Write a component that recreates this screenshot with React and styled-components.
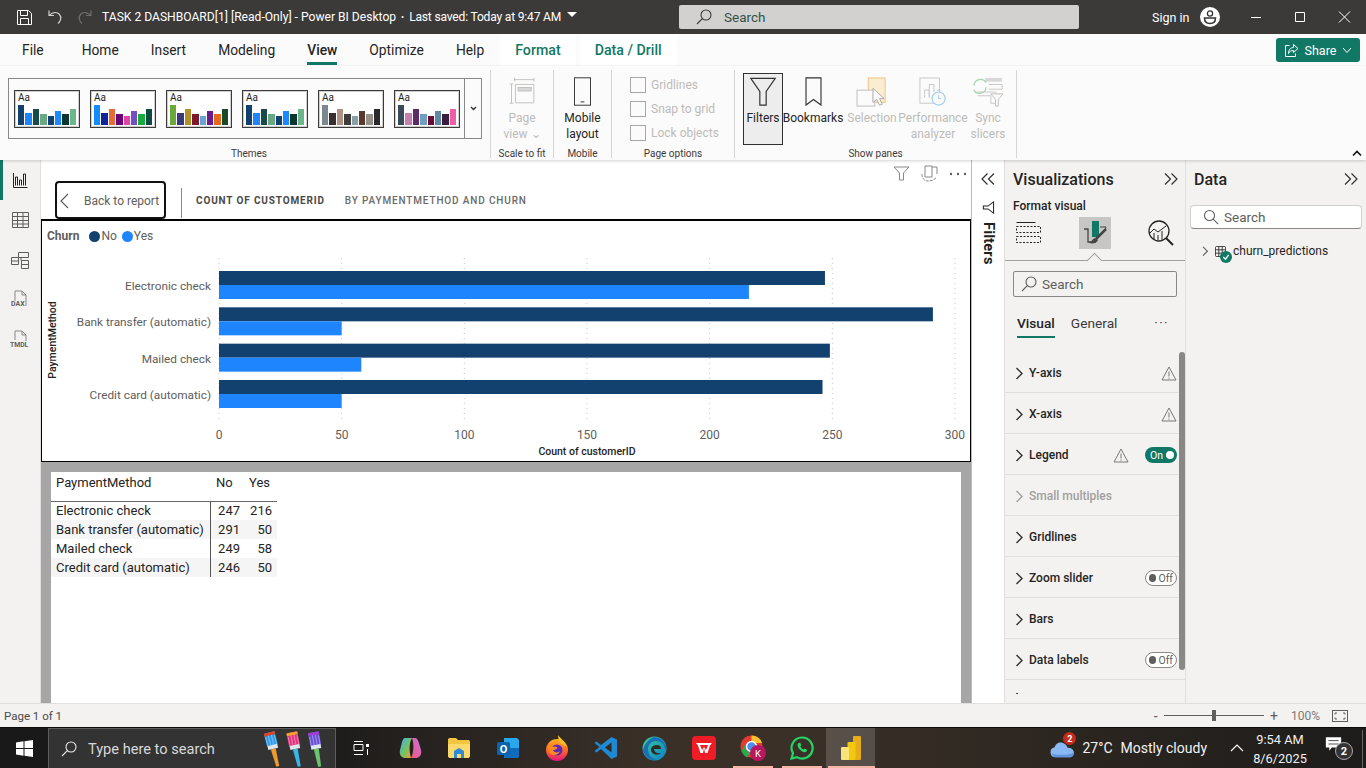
import React from "react";
import styled, { createGlobalStyle } from "styled-components";

const Global = createGlobalStyle`
  html, body { margin: 0; padding: 0; width: 1366px; height: 768px; overflow: hidden; background: #fff; }
  body { font-family: Roboto, "Liberation Sans", sans-serif; color: #252423; }
  * { box-sizing: border-box; }
  svg { display: block; flex: none; }
`;

const Page = styled.div`width:1366px;height:768px;display:flex;flex-direction:column;overflow:hidden;`;

/* Title bar */
const TitleBar = styled.header`height:34px;background:#3b3a39;display:flex;align-items:center;color:#fff;position:relative;flex:none;`;
const QuickIcons = styled.div`display:flex;align-items:center;gap:14px;padding-left:16px;width:102px;`;
const DocTitle = styled.div`font-size:12.1px;white-space:nowrap;display:flex;align-items:center;width:577px;`;
const Saved = styled.span`letter-spacing:-.2px;`;
const Dot = styled.span`margin:0 5px 0 5px;font-size:9px;`;
const Caret = styled.span`margin-left:6px;margin-top:-5px;width:0;height:0;border-left:5px solid transparent;border-right:5px solid transparent;border-top:5px solid #fff;`;
const SearchBar = styled.div`width:400px;height:24px;background:#d2d1cf;border-radius:2px;display:flex;align-items:center;gap:12px;padding-left:17px;font-size:13.5px;color:#33524c;`;
const SignIn = styled.div`font-size:12.5px;margin-left:73px;width:48px;`;
const Avatar = styled.div`width:20px;height:20px;`;
const WinControls = styled.div`display:flex;align-items:center;margin-left:29px;gap:28px;`;

/* Tabs */
const TabsRow = styled.nav`height:32px;background:#fbfbfb;display:flex;align-items:stretch;padding-left:22px;position:relative;flex:none;`;
const Tab = styled.div`
  font-size:13.8px;display:flex;align-items:center;height:100%;margin-right:${p=>p.$gap||32}px;white-space:nowrap;position:relative;
  font-weight:${p=>p.$active?500:400};color:#252423;
  ${p=>p.$active&&`&::after{content:"";position:absolute;left:0;right:0;bottom:1px;height:3px;background:#117865;}`}
`;
const ContextTab = styled.div`font-size:14.2px;font-weight:500;color:#117865;background:#fff;height:31px;display:flex;align-items:center;padding:0 15px;margin-right:4px;white-space:nowrap;`;
const ShareButton = styled.button`position:absolute;right:6px;top:4px;width:84px;height:24px;border:0;border-radius:3px;background:#117865;color:#fff;font:400 12.5px Roboto,sans-serif;display:flex;align-items:center;justify-content:center;gap:6px;`;

/* Ribbon */
const Ribbon = styled.section`height:94px;background:#fbfbfb;display:flex;padding-left:8px;position:relative;flex:none;box-shadow:0 1px 3px rgba(0,0,0,.18);z-index:2;`;
const Group = styled.div`width:${p=>p.$w}px;display:flex;flex-direction:column;align-items:stretch;position:relative;height:88px;margin-top:4px;
  border-right:1px solid #d6d6d6;`;
const GroupBody = styled.div`flex:1;display:flex;align-items:flex-start;min-height:0;padding-left:${p=>p.$pl||0}px;justify-content:${p=>p.$center?"center":"flex-start"};`;
const GroupLabel = styled.div`height:14px;margin-bottom:-3px;text-align:center;font-size:10px;line-height:14px;color:#3b3a39;white-space:nowrap;`;
const Gallery = styled.div`width:474px;height:61px;margin-top:8px;border:1px solid #8a8886;display:flex;background:#fbfbfb;`;
const ThemeList = styled.div`flex:1;display:flex;gap:10px;padding:11px 0 0 5px;`;
const ThemeCard = styled.div`width:66px;height:38px;border:1px solid #3b3a39;background:#fff;padding:1px 2px 2px 3px;box-shadow:0 0 0 1px #cfcfcf inset;position:relative;`;
const ThemeAa = styled.div`font-size:10px;line-height:11px;color:#252423;height:12px;`;
const SwatchRow = styled.div`display:flex;align-items:flex-end;gap:1px;position:absolute;left:3px;right:3px;bottom:2px;height:22px;`;
const Swatch = styled.i`flex:1;height:${p=>p.$h}px;background:${p=>p.$c};display:block;`;
const GalleryMore = styled.div`width:17px;border-left:1px solid #8a8886;display:flex;align-items:center;justify-content:center;`;
const BigBtn = styled.div`
  width:${p=>p.$w}px;height:${p=>p.$active?72:75}px;display:flex;flex-direction:column;align-items:center;padding-top:7px;flex:none;
  font-size:12px;line-height:16px;text-align:center;white-space:nowrap;color:${p=>p.$off?"#bdbbb9":"#252423"};
  ${p=>p.$active&&`background:#ededed;border:1px solid #323130;padding-top:3px;margin-top:3px;`}
`;
const BigIcon = styled.div`height:30px;display:flex;align-items:flex-start;justify-content:center;margin-bottom:3px;`;
const CheckList = styled.div`display:flex;flex-direction:column;gap:8px;padding:7px 0 0 18px;`;
const CheckRow = styled.div`display:flex;align-items:center;gap:5px;font-size:12px;color:#bdbbb9;height:16px;`;
const CheckBox = styled.i`display:block;width:16px;height:16px;border:1px solid #a8a6a4;`;
const Collapse = styled.div`position:absolute;right:4px;bottom:3px;`;

/* Main */
const Main = styled.main`flex:1;display:flex;min-height:0;`;
const LeftNav = styled.aside`width:41px;background:#f3f2f1;border-right:1px solid #e1dfdd;display:flex;flex-direction:column;align-items:center;position:relative;flex:none;padding-top:10px;gap:20px;`;
const NavMark = styled.div`position:absolute;left:0;top:0;width:3px;height:40px;background:#117865;`;
const NavIcon = styled.div`width:20px;height:20px;display:flex;align-items:center;justify-content:center;`;

const Canvas = styled.div`width:930px;display:flex;flex-direction:column;flex:none;background:#fff;`;
const CanvasHead = styled.div`height:60px;display:flex;align-items:flex-start;padding:21px 0 0 14px;position:relative;flex:none;`;
const BackBtn = styled.div`width:111px;height:38px;border:2px solid #111;border-radius:4px;display:flex;align-items:center;padding:2px 0 0 3px;gap:15px;font-size:12px;color:#5f5e5c;`;
const HeadSep = styled.div`width:1px;height:30px;background:#8a8886;margin:7px 14px 0 15px;`;
const VizTitle = styled.div`font-size:10px;letter-spacing:.85px;line-height:39px;font-weight:${p=>p.$bold?700:500};color:${p=>p.$bold?"#4a4947":"#6b6a68"};white-space:nowrap;margin-right:20px;`;
const HeadTools = styled.div`position:absolute;right:4px;top:5px;display:flex;gap:10px;align-items:center;`;
const ChartBox = styled.div`height:242px;border:1px solid #000;outline:.5px solid #000;flex:none;background:#fff;`;
const Legend = styled.div`height:30px;display:flex;align-items:center;padding-left:5px;font-size:12px;color:#605e5c;`;
const LegendTitle = styled.b`font-weight:700;margin-right:10px;`;
const LegendItem = styled.span`display:flex;align-items:center;gap:1px;margin-right:5px;`;
const LegendDot = styled.i`width:11px;height:11px;border-radius:50%;background:${p=>p.$c};display:block;`;
const TableArea = styled.div`flex:1;background:#a6a6a6;padding:10px 10px 0;min-height:0;`;
const TablePanel = styled.div`background:#fff;height:100%;`;
const Matrix = styled.table`border-collapse:collapse;font-size:13px;color:#252423;width:226px;table-layout:fixed;`;
const Th = styled.th`font-weight:400;text-align:left;height:29px;padding:0 0 8px ${p=>p.$pad||5}px;border-bottom:1px solid #666;`;
const Td = styled.td`height:19px;padding:0 ${p=>p.$num?5:0}px 0 ${p=>p.$num?0:5}px;text-align:${p=>p.$num?"right":"left"};background:${p=>p.$alt?"#f5f5f5":"#fff"};white-space:nowrap;${p=>p.$first&&"border-right:1px solid #555;"}`;

const FilterStrip = styled.div`width:34px;flex:none;background:#fff;border-left:1px solid #bdbbb9;border-right:1px solid #e1dfdd;display:flex;flex-direction:column;align-items:center;padding-top:13px;`;
const FilterFunnel = styled.svg`margin-top:16px;`;
const FiltersLabel = styled.div`writing-mode:vertical-rl;font-size:14.5px;font-weight:700;color:#201f1e;margin-top:8px;letter-spacing:.2px;`;

const Pane = styled.aside`width:${p=>p.$w}px;flex:none;background:#f3f2f1;display:flex;flex-direction:column;position:relative;border-right:${p=>p.$last?"0":"1px solid #e1dfdd"};min-height:0;`;
const PaneHead = styled.div`height:38px;display:flex;align-items:center;justify-content:space-between;padding:0 ${p=>p.$r||7}px 0 8px;flex:none;font-size:16px;font-weight:500;color:#252423;`;
const SubHead = styled.div`font-size:12px;font-weight:500;padding-left:8px;line-height:16px;height:16px;`;
const VizTabs = styled.div`height:44px;display:flex;align-items:flex-start;padding:0 0 0 7px;position:relative;border-bottom:1px solid #a19f9d;margin-top:3px;flex:none;`;
const VizTabBtn = styled.div`width:32px;height:32px;display:flex;align-items:center;justify-content:center;margin-right:${p=>p.$mr}px;background:${p=>p.$on?"#c8c6c4":"transparent"};`;
const Notch = styled.i`position:absolute;left:84px;bottom:-6px;width:11px;height:11px;background:#f3f2f1;border-left:1px solid #a19f9d;border-top:1px solid #a19f9d;transform:rotate(45deg);`;
const PaneSearch = styled.div`height:26px;margin:10px 8px 0;border:1px solid #8a8886;border-radius:2px;display:flex;align-items:center;gap:5px;padding-left:7px;font-size:13.5px;color:#605e5c;flex:none;`;
const SubTabs = styled.div`display:flex;align-items:flex-start;height:43px;padding:18px 0 0 12px;font-size:13.7px;flex:none;position:relative;`;
const SubTab = styled.div`margin-right:16px;height:22px;font-weight:${p=>p.$on?500:400};position:relative;color:${p=>p.$on?"#252423":"#3b3a39"};
  ${p=>p.$on&&`&::after{content:"";position:absolute;left:0;right:0;bottom:-1px;height:2px;background:#117865;}`}`;
const More = styled.div`position:absolute;right:16px;top:19px;font-size:13px;letter-spacing:1.5px;line-height:13px;color:#3b3a39;`;
const Sections = styled.div`flex:1;min-height:0;overflow:hidden;padding-top:12px;`;
const SectionRow = styled.div`height:41px;border-bottom:1px solid #e1dfdd;display:flex;align-items:center;padding:2px 9px 0 9px;margin-right:-1px;font-size:12px;font-weight:500;gap:5px;color:${p=>p.$off?"#a19f9d":"#252423"};`;
const SectionName = styled.span`flex:1;`;
const Toggle = styled.span`width:32px;height:16px;border-radius:8px;display:flex;align-items:center;font-size:10.5px;font-weight:400;padding:0 3px;
  ${p=>p.$on?`background:#117865;color:#fff;justify-content:space-between;padding-left:5px;`:`border:1px solid #8a8886;color:#605e5c;gap:2px;background:#fff;`}`;
const Knob = styled.i`width:8px;height:8px;border-radius:50%;display:block;background:${p=>p.$on?"#fff":"#605e5c"};`;
const Warn = styled.span`margin-right:${p=>p.$mr||0}px;display:block;`;
const TinyMark = styled.i`display:block;width:2px;height:1px;background:#444;margin:13px 0 0 11px;`;
const Scrollbar = styled.div`position:absolute;right:0;top:192px;width:6px;height:318px;background:#8a8886;border-radius:3px;`;
const DataSearch = styled.div`height:24px;margin:7px 4px 0 4px;background:#fff;border:1px solid #d2d0ce;border-bottom-color:#8a8886;border-radius:4px;display:flex;align-items:center;gap:5px;padding-left:12px;font-size:13.5px;color:#605e5c;flex:none;`;
const TreeRow = styled.div`display:flex;align-items:center;font-size:12px;padding:15px 0 0 15px;color:#252423;`;
const TableGlyph = styled.span`position:relative;display:block;width:11px;height:11px;margin:0 7px 0 6px;`;
const TableCheck = styled.span`position:absolute;left:5px;top:5px;width:12px;height:12px;border-radius:50%;background:#117865;`;

/* Status */
const StatusBar = styled.footer`height:24px;background:#f3f2f1;border-top:1px solid #e1dfdd;display:flex;align-items:center;justify-content:space-between;padding:0 18px 0 4px;font-size:11.5px;color:#4a4947;flex:none;`;
const ZoomBox = styled.div`display:flex;align-items:center;color:#605e5c;`;
const ZoomTrack = styled.div`width:100px;height:1px;background:#605e5c;margin:0 6px;position:relative;`;
const ZoomThumb = styled.i`position:absolute;left:48px;top:-5px;width:4px;height:11px;background:#605e5c;`;
const ZoomPlus = styled.span`font-size:14px;`;
const ZoomPct = styled.span`margin:0 12px 0 13px;color:#7a7977;font-size:12px;`;

/* Taskbar */
const Taskbar = styled.footer`height:41px;flex:none;display:flex;align-items:stretch;color:#fff;background:linear-gradient(90deg,#191919 0,#1b1a1a 22%,#3a3028 48%,#3a3028 58%,#2c2620 78%,#1d1c1b 100%);border-top:1px solid #0a0a0a;`;
const StartBtn = styled.div`width:48px;display:flex;align-items:center;justify-content:center;`;
const TaskSearch = styled.div`width:288px;background:#333;border:1px solid #5c5c5c;border-bottom:0;display:flex;align-items:center;padding-left:12px;gap:11px;font-size:14.6px;color:#d8d8d8;position:relative;`;
const BrushWrap = styled.div`position:absolute;right:4px;top:1px;`;
const AppCell = styled.div`width:49px;display:flex;align-items:center;justify-content:center;position:relative;background:${p=>p.$active?"rgba(255,255,255,.16)":"transparent"};
  ${p=>p.$run&&`&::after{content:"";position:absolute;left:${p.$active?2:5}px;right:${p.$active?0:4}px;bottom:0;height:2px;background:#f6b6a6;}`}`;
const Tray = styled.div`margin-left:auto;display:flex;align-items:center;font-size:14px;color:#f2f2f2;`;
const TrayCloud = styled.div`position:relative;width:26px;height:24px;margin-right:6px;`;
const CloudBadge = styled.span`position:absolute;right:0;top:-4px;width:13px;height:13px;border-radius:50%;background:#c42b1c;color:#fff;font-size:9px;font-weight:700;display:flex;align-items:center;justify-content:center;`;
const Forecast = styled.span`margin-left:8px;`;
const TrayChevron = styled.svg`margin:0 5px 0 22px;`;
const Clock = styled.div`width:60px;text-align:center;font-size:12.8px;line-height:19px;color:#f0f0f0;padding-top:1px;`;
const Notif = styled.div`position:relative;width:30px;height:28px;margin:0 7px 0 15px;`;
const NotifIcon = styled.svg`margin-top:2px;`;
const NotifBadge = styled.span`position:absolute;left:10px;top:8px;width:18px;height:18px;border-radius:50%;background:#333;border:1px solid #aaa;font-size:11px;font-weight:700;display:flex;align-items:center;justify-content:center;color:#fff;`;
const EdgeLine = styled.i`width:1px;background:#666;margin:2px 3px 0 0;display:block;`;

const Ln = ({d,c="#fff",w=1,s=16,vb,...r})=>(
  <svg width={s} height={s} viewBox={vb||`0 0 ${s} ${s}`} fill="none" stroke={c} strokeWidth={w} {...r}><path d={d}/></svg>
);
const Chev = ({c="#323130",s=10})=>(<svg width={s} height={s*1.3} viewBox="0 0 10 13" fill="none" stroke={c} strokeWidth="1.4"><path d="M2.5 1 8 6.5 2.5 12"/></svg>);
const DblChev = ({left})=>(<svg width="14" height="12" viewBox="0 0 14 12" fill="none" stroke="#323130" strokeWidth="1.2"><path d={left?"M6.5 .5 1 6l5.5 5.5M13 .5 7.500 6l5.5 5.500":"M1 .5 6.500 6 1 11.500M7.500 .5 13 6l-5.500 5.500"}/></svg>);
const WarnIcon = ()=>(<svg width="16" height="15" viewBox="0 0 16 15" fill="none" stroke="#7a7876"><path d="M8 1 15 14H1Z"/><path d="M8 5.500v5M8 11.500v1.200"/></svg>);
const Magnifier = ({c="#605e5c",s=16})=>(<svg width={s} height={s} viewBox="0 0 16 16" fill="none" stroke={c} strokeWidth="1.1"><circle cx="10" cy="6" r="5"/><path d="M6.300 9.700 1 15"/></svg>);
const MagnifierR = ()=>(<svg width="16" height="16" viewBox="0 0 16 16" fill="none" stroke="#605e5c" strokeWidth="1.1"><circle cx="6.500" cy="6.500" r="5"/><path d="m10.200 10.200 5 5"/></svg>);

const themes=[
 ["#12406f","#1f85ff","#1a4a4a","#6aa884","#12406f","#1e88ff","#0f3530","#6db58a"],
 ["#118dff","#12239e","#e66c37","#6b007b","#e044a7","#744ec2","#1aab40","#0d4a44"],
 ["#6aa83a","#3a3a7a","#b3902a","#7a1a2a","#6aa0d8","#6a1a8a","#e2691e","#1a4a2a"],
 ["#12406f","#1f85ff","#1a4a4a","#6aa884","#12406f","#1e88ff","#0f3530","#6db58a"],
 ["#7b8a8e","#3a2f2f","#b09080","#3d3d3d","#8aa0a8","#5a3a30","#959088","#2a2a2a"],
 ["#3a4a5a","#c77fb0","#5a2d6a","#6f9fc0","#6a0a3a","#5f88a8","#3a1d3f","#ee5fa8"],
];
const hts=[20,12,16,11,9,14,11,16];

const rows=[["Electronic check",247,216],["Bank transfer (automatic)",291,50],["Mailed check",249,58],["Credit card (automatic)",246,50]];

function Chart(){
  const x0=177, k=2.4533;
  const ticks=[0,50,100,150,200,250,300];
  return (
    <svg width="928" height="210" viewBox="0 0 928 210" fontFamily="Roboto, sans-serif">
      {ticks.map(t=>(<line key={t} x1={x0+t*k} x2={x0+t*k} y1="7" y2="172" stroke="#c8c6c4" strokeDasharray="1 4"/>))}
      {rows.map((r,i)=>{const y=20+i*36.33;return(
        <g key={r[0]}>
          <rect x={x0} y={y} width={r[1]*k} height="14" fill="#12406f"/>
          <rect x={x0} y={y+14} width={r[2]*k} height="14" fill="#1f85ff"/>
          <text x="169" y={y+19} textAnchor="end" fontSize="11.800" fill="#605e5c">{r[0]}</text>
        </g>);})}
      {ticks.map(t=>(<text key={t} x={x0+t*k} y="188" textAnchor="middle" fontSize="12" fill="#605e5c">{t}</text>))}
      <text x="545" y="204" textAnchor="middle" fontSize="10.500" fontWeight="500" fill="#252423">Count of customerID</text>
      <text transform="translate(14,89) rotate(-90)" textAnchor="middle" fontSize="10.500" fontWeight="500" fill="#252423">PaymentMethod</text>
    </svg>
  );
}

const Brushes=()=>{
  const B=({x,head,tip,handle,r})=>(
    <g transform={`translate(${x} 2) rotate(${r} 8 18)`}>
      <rect x="3" y="0" width="11" height="14" rx="1.500" fill={head}/>
      <path d="M4 4v9M7 2v11M10 2v11M13 4v9" stroke="#fff" strokeOpacity=".5" strokeWidth=".7"/>
      <rect x="3" y="0" width="11" height="3" fill={tip}/>
      <rect x="3.500" y="13" width="10" height="4" fill="#dfe7ee"/>
      <path d="M6 17h5l-.8 18h-3Z" fill={handle}/>
    </g>);
  return(<svg width="68" height="38" viewBox="0 0 68 38">
    <B x="2" head="#2f9be8" tip="#d8452a" handle="#ef9a2d" r={-14}/>
    <B x="24" head="#e2357f" tip="#f0a52a" handle="#38b6e8" r={-12}/>
    <B x="45" head="#6a4fd8" tip="#a03ed0" handle="#6cc46e" r={-10}/>
  </svg>);
};

export default function App(){
  return (<Page><Global/>
    <TitleBar>
      <QuickIcons>
        <svg width="17" height="17" viewBox="0 0 17 17" fill="none" stroke="#fff"><path d="M1.500 1.500h11l3 3v11h-14z"/><path d="M4.500 1.500v5h7v-5M4.500 15.500v-6h8v6"/></svg>
        <svg width="16" height="17" viewBox="0 0 16 17" fill="none" stroke="#cfcfcf" strokeWidth="1.2"><path d="M2 1.500v5h5"/><path d="M2.300 6.300C5 3 10 2.500 12.500 5.500c2.500 3 1 7-1.500 9"/></svg>
        <svg width="16" height="17" viewBox="0 0 16 17" fill="none" stroke="#6f6e6d" strokeWidth="1.2"><path d="M14 1.500v5H9"/><path d="M13.700 6.300C11 3 6 2.500 3.500 5.500c-2.500 3-1 7 1.500 9"/></svg>
      </QuickIcons>
      <DocTitle>TASK 2 DASHBOARD[1] [Read-Only] - Power BI Desktop<Dot>•</Dot><Saved>Last saved: Today at 9:47 AM</Saved><Caret/></DocTitle>
      <SearchBar><Magnifier c="#3b3a39" s={16}/>Search</SearchBar>
      <SignIn>Sign in</SignIn>
      <Avatar><svg width="20" height="20" viewBox="0 0 20 20"><circle cx="10" cy="10" r="10" fill="#fff"/><circle cx="10" cy="6.500" r="2.600" fill="none" stroke="#333" strokeWidth="1.300"/><path d="M4.500 11h11c0 4-2.500 5.500-5.500 5.500S4.500 15 4.500 11Z" fill="none" stroke="#333" strokeWidth="1.500"/></svg></Avatar>
      <WinControls>
        <Ln s={16} d="M2 8.500h10"/>
        <Ln s={16} d="M2.500 3.500h9v9h-9z" />
        <Ln s={16} d="M2 2.500l11 11M13 2.500l-11 11"/>
      </WinControls>
    </TitleBar>
    <TabsRow>
      <Tab $gap={38}>File</Tab><Tab>Home</Tab><Tab>Insert</Tab><Tab>Modeling</Tab><Tab $active>View</Tab><Tab>Optimize</Tab><Tab $gap={16}>Help</Tab>
      <ContextTab>Format</ContextTab><ContextTab>Data / Drill</ContextTab>
      <ShareButton>
        <svg width="15" height="15" viewBox="0 0 15 15" fill="none" stroke="#fff"><path d="M5.500 2.500h-4v11h10v-3"/><path d="M9.500 1.500 14 5.500l-4.500 4V7.500C7 7.500 5.500 8.500 4.500 10.500c0-3.500 2-6 5-6Z"/></svg>
        Share
        <svg width="10" height="7" viewBox="0 0 10 7" fill="none" stroke="#fff"><path d="m1 1 4 4.500L9 1"/></svg>
      </ShareButton>
    </TabsRow>
    <Ribbon>
      <Group $w={483}>
        <GroupBody><Gallery>
          <ThemeList>{themes.map((t,i)=>(<ThemeCard key={i}><ThemeAa>Aa</ThemeAa><SwatchRow>{t.map((c,j)=><Swatch key={j} $c={c} $h={hts[j]}/>)}</SwatchRow></ThemeCard>))}</ThemeList>
          <GalleryMore><svg width="7" height="5" viewBox="0 0 7 5" fill="none" stroke="#323130" strokeWidth="1.400"><path d="m1 1 2.500 2.500L6 1"/></svg></GalleryMore>
        </Gallery></GroupBody>
        <GroupLabel>Themes</GroupLabel>
      </Group>
      <Group $w={63}>
        <GroupBody $center><BigBtn $w={50} $off>
          <BigIcon><svg width="28" height="28" viewBox="0 0 30 32" fill="none" stroke="#bdbbb9"><path d="M6.500 1v4M28.500 1v4M6.500 3h22M1 8h4M1 30h4M3 8v22M7.500 8.500h21v21h-21z"/><rect x="10.500" y="12" width="15" height="4" fill="#d8d8d8"/></svg></BigIcon>
          Page<br/>view ⌄
        </BigBtn></GroupBody>
        <GroupLabel>Scale to fit</GroupLabel>
      </Group>
      <Group $w={58}>
        <GroupBody $center><BigBtn $w={50}>
          <BigIcon><svg width="17" height="29" viewBox="0 0 18 30" fill="none" stroke="#323130"><rect x=".5" y=".5" width="17" height="29"/><path d="M7 26h4"/></svg></BigIcon>
          Mobile<br/>layout
        </BigBtn></GroupBody>
        <GroupLabel>Mobile</GroupLabel>
      </Group>
      <Group $w={123}>
        <GroupBody><CheckList>
          <CheckRow><CheckBox/>Gridlines</CheckRow>
          <CheckRow><CheckBox/>Snap to grid</CheckRow>
          <CheckRow><CheckBox/>Lock objects</CheckRow>
        </CheckList></GroupBody>
        <GroupLabel>Page options</GroupLabel>
      </Group>
      <Group $w={282}>
        <GroupBody $pl={8}>
          <BigBtn $w={40} $active>
            <BigIcon><svg width="28" height="29" viewBox="0 0 30 32" fill="none" stroke="#323130" strokeWidth="1.300"><path d="M1.500 1.500h27L18.500 16v15h-7V16Z"/></svg></BigIcon>
            Filters
          </BigBtn>
          <BigBtn $w={60}>
            <BigIcon><svg width="17" height="29" viewBox="0 0 18 31" fill="none" stroke="#323130" strokeWidth="1.200"><path d="M1 1h16v29l-8-6-8 6Z"/></svg></BigIcon>
            Bookmarks
          </BigBtn>
          <BigBtn $w={58} $off>
            <BigIcon><svg width="32" height="30" viewBox="0 0 34 32"><rect x="13" y="1" width="18" height="26" fill="#faeed2" stroke="#f2c078"/><rect x="1" y="14" width="19" height="17" fill="#fbfbfb" stroke="#bdbbb9"/><path d="M18 12v15l4-3 3 6 3-1-3-6h5Z" fill="#fbfbfb" stroke="#a8a6a4"/></svg></BigIcon>
            Selection
          </BigBtn>
          <BigBtn $w={64} $off>
            <BigIcon><svg width="28" height="30" viewBox="0 0 30 32" fill="none"><rect x="1" y="1" width="21" height="27" stroke="#c8c6c4"/><path d="M6 22v-8h5v8M11 22V8h5v8" stroke="#c8c6c4"/><circle cx="21" cy="23" r="7" stroke="#9fcdee" strokeWidth="1.300" fill="#fbfbfb"/><path d="M21 19v4h3M19 14h4" stroke="#9fcdee"/></svg></BigIcon>
            Performance<br/>analyzer
          </BigBtn>
          <BigBtn $w={46} $off>
            <BigIcon><svg width="32" height="30" viewBox="0 0 34 32" fill="none"><rect x="14" y="1" width="18" height="4" fill="#d8d8d8"/><path d="M18 8h14v5H18M6 16h20M6 20h14v8h6" stroke="#c8c6c4"/><path d="M2 9a7 7 0 0 1 13-3M15 11a7 7 0 0 1-13 3" stroke="#a6d4b0" strokeWidth="1.300"/><path d="M20 18h13l-5 6v7h-3v-7Z" stroke="#bdbbb9" fill="#fbfbfb"/></svg></BigIcon>
            Sync<br/>slicers
          </BigBtn>
        </GroupBody>
        <GroupLabel>Show panes</GroupLabel>
      </Group>
      <Collapse><svg width="10" height="7" viewBox="0 0 10 7" fill="none" stroke="#111" strokeWidth="1.600"><path d="m1 5.500 4-4 4 4"/></svg></Collapse>
    </Ribbon>
    <Main>
      <LeftNav>
        <NavMark/>
        <NavIcon><svg width="15" height="15" viewBox="0 0 15 15" fill="none" stroke="#252423"><path d="M.5 0v14.500h14M2.500 12.500V4h2v8.500M6.500 12.500V7h2v5.500M10.500 12.500V1h2v11.500"/></svg></NavIcon>
        <NavIcon><svg width="17" height="16" viewBox="0 0 17 16" fill="none" stroke="#605e5c"><path d="M.5.500h16v15H.5zM.5 4.500h16M.5 8.500h16M.5 12h16M5.500 .5v15M11 .5v15"/></svg></NavIcon>
        <NavIcon><svg width="18" height="18" viewBox="0 0 18 18" fill="none" stroke="#605e5c"><path d="M7.500 1.500h10v5h-10zM.5 6.500h7v7h-7zM.5 10h7M10.500 9.500h7v4h-7zM10.500 13.500h7v4h-7zM7.500 3.500v3M10 6.500v3"/></svg></NavIcon>
        <NavIcon><svg width="18" height="20" viewBox="0 0 18 20" fontFamily="Roboto"><path d="M4 11V1h7l4 4v11" fill="none" stroke="#8a8886"/><path d="M11 1v4h4" fill="none" stroke="#8a8886"/><text x="0" y="16" fontSize="7" fontWeight="700" fill="#605e5c">DAX</text></svg></NavIcon>
        <NavIcon><svg width="20" height="20" viewBox="0 0 20 20" fontFamily="Roboto"><path d="M5 10V1h7l4 4v6" fill="none" stroke="#8a8886"/><path d="M12 1v4h4" fill="none" stroke="#8a8886"/><text x="0" y="17" fontSize="6.800" fontWeight="700" fill="#605e5c">TMDL</text></svg></NavIcon>
      </LeftNav>
      <Canvas>
        <CanvasHead>
          <BackBtn><svg width="9" height="16" viewBox="0 0 9 16" fill="none" stroke="#605e5c" strokeWidth="1.200"><path d="M8 1 1 8l7 7"/></svg><span>Back to report</span></BackBtn>
          <HeadSep/>
          <VizTitle $bold>COUNT OF CUSTOMERID</VizTitle>
          <VizTitle>BY PAYMENTMETHOD AND CHURN</VizTitle>
          <HeadTools>
            <svg width="18" height="15" viewBox="0 0 18 15" fill="none" stroke="#8a8886"><path d="M1 1h15L10.500 7v7h-4V7Z"/></svg>
            <svg width="18" height="17" viewBox="0 0 18 17" fill="none" stroke="#8a8886"><path d="M4 1h7v11H4zM11 2h5v7" /><path d="M1 9c0 5 3 7 6 7s6-1 8-3" strokeDasharray="3 1"/></svg>
            <svg width="18" height="4" viewBox="0 0 18 4" fill="#605e5c"><circle cx="2" cy="2" r="1.200"/><circle cx="9" cy="2" r="1.200"/><circle cx="16" cy="2" r="1.200"/></svg>
          </HeadTools>
        </CanvasHead>
        <ChartBox>
          <Legend><LegendTitle>Churn</LegendTitle><LegendItem><LegendDot $c="#12406f"/>No</LegendItem><LegendItem><LegendDot $c="#1f85ff"/>Yes</LegendItem></Legend>
          <Chart/>
        </ChartBox>
        <TableArea><TablePanel>
          <Matrix>
            <colgroup><col width="159"/><col width="35"/><col width="32"/></colgroup>
            <thead><tr><Th>PaymentMethod</Th><Th $pad={6}>No</Th><Th $pad={4}>Yes</Th></tr></thead>
            <tbody>{rows.map((r,i)=>(<tr key={r[0]}><Td $first $alt={i%2===1}>{r[0]}</Td><Td $num $alt={i%2===1}>{r[1]}</Td><Td $num $alt={i%2===1}>{r[2]}</Td></tr>))}</tbody>
          </Matrix>
        </TablePanel></TableArea>
      </Canvas>
      <FilterStrip>
        <DblChev left/>
        <FilterFunnel width="14" height="13" viewBox="0 0 14 14" fill="none" stroke="#252423" strokeWidth="1.100"><path d="M13 1v12L7 8.500H2v-3h5Z"/></FilterFunnel>
        <FiltersLabel>Filters</FiltersLabel>
      </FilterStrip>
      <Pane $w={181}>
        <PaneHead>Visualizations<DblChev/></PaneHead>
        <SubHead>Format visual</SubHead>
        <VizTabs>
          <VizTabBtn $mr={35}><svg width="25" height="24" viewBox="0 0 25 24" fill="none" stroke="#252423"><path d="M.5 1.500h19"/><path d="M.5 5.500h24v6H.5zM.5 15.500h24v6H.5z" strokeDasharray="2 1.500"/></svg></VizTabBtn>
          <VizTabBtn $on $mr={34}><svg width="24" height="26" viewBox="0 0 24 26" fill="none"><path d="M1 9h4v13h8" stroke="#444" strokeWidth="1.300"/><rect x="9" y="1" width="7" height="16" fill="#117865"/><path d="M17 7h6l-1 3" stroke="#444"/><path d="M23 9 13 19" stroke="#444" strokeWidth="2.500"/><path d="M12 18c-3 1-3 4-6 5 4 1 8 0 9-3Z" fill="#444"/></svg></VizTabBtn>
          <VizTabBtn $mr={0}><svg width="26" height="26" viewBox="0 0 26 26" fill="none" stroke="#252423"><circle cx="11" cy="11" r="10" strokeWidth="1.300"/><path d="m18 18 7 7" strokeWidth="2"/><path d="M2 13l4-4 4 3 8-6M6 19v-6M10 20v-5M14 20V11"/></svg></VizTabBtn>
          <Notch/>
        </VizTabs>
        <PaneSearch><Magnifier/>Search</PaneSearch>
        <SubTabs><SubTab $on>Visual</SubTab><SubTab>General</SubTab><More>···</More></SubTabs>
        <Sections>
          <SectionRow><Chev/><SectionName>Y-axis</SectionName><WarnIcon/></SectionRow>
          <SectionRow><Chev/><SectionName>X-axis</SectionName><WarnIcon/></SectionRow>
          <SectionRow><Chev/><SectionName>Legend</SectionName><Warn $mr={11}><WarnIcon/></Warn><Toggle $on>On<Knob $on/></Toggle></SectionRow>
          <SectionRow $off><Chev c="#a19f9d"/><SectionName>Small multiples</SectionName></SectionRow>
          <SectionRow><Chev/><SectionName>Gridlines</SectionName></SectionRow>
          <SectionRow><Chev/><SectionName>Zoom slider</SectionName><Toggle><Knob/>Off</Toggle></SectionRow>
          <SectionRow><Chev/><SectionName>Bars</SectionName></SectionRow>
          <SectionRow><Chev/><SectionName>Data labels</SectionName><Toggle><Knob/>Off</Toggle></SectionRow>
          <TinyMark/>
        </Sections>
        <Scrollbar/>
      </Pane>
      <Pane $w={180} $last>
        <PaneHead $r={8}>Data<DblChev/></PaneHead>
        <DataSearch><MagnifierR/>Search</DataSearch>
        <TreeRow><Chev c="#605e5c" s={8}/><TableGlyph>
          <svg width="11" height="11" viewBox="0 0 13 13" fill="none" stroke="#252423"><rect x=".5" y=".5" width="12" height="12" rx="1.500"/><path d="M.5 4.500h12M.5 8.500h12M4.500 .5v12M8.500 .5v12"/></svg>
          <TableCheck><svg width="12" height="12" viewBox="0 0 11 11" fill="none" stroke="#fff" strokeWidth="1.200"><path d="m3 5.500 2 2 3-4"/></svg></TableCheck>
        </TableGlyph><span>churn_predictions</span></TreeRow>
      </Pane>
    </Main>
    <StatusBar>
      <span>Page 1 of 1</span>
      <ZoomBox><b>-</b><ZoomTrack><ZoomThumb/></ZoomTrack><ZoomPlus>+</ZoomPlus><ZoomPct>100%</ZoomPct>
        <svg width="16" height="12" viewBox="0 0 16 12" fill="none" stroke="#605e5c"><rect x=".5" y=".5" width="15" height="11"/><path d="M3 4.500V3h2M11 3h2v1.500M13 7.500V9h-2M5 9H3V7.500"/></svg>
      </ZoomBox>
    </StatusBar>
    <Taskbar>
      <StartBtn><svg width="17" height="17" viewBox="0 0 17 17" fill="#fff"><path d="M0 2.400 7.500 1.300v6.600H0zM8.500 1.200 17 0v7.900H8.500zM0 8.900h7.500v6.800L0 14.600zM8.500 8.900H17V17l-8.500-1.200z"/></svg></StartBtn>
      <TaskSearch><Magnifier c="#e8e8e8" s={16}/>Type here to search<BrushWrap><Brushes/></BrushWrap></TaskSearch>
      <AppCell><svg width="18" height="18" viewBox="0 0 18 18" fill="none" stroke="#fff"><path d="M2 2.500h9M2 5.500h9v6H2zM2 15.500h9"/><rect x="14" y="5" width="3" height="3" fill="#fff" stroke="none"/><path d="M15.500 10v6"/></svg></AppCell>
      <AppCell><svg width="24" height="24" viewBox="0 0 24 24"><defs><linearGradient id="cp" x1="0" y1="0" x2="1" y2="1"><stop offset="0" stopColor="#3ea8f5"/><stop offset=".5" stopColor="#6fc46a"/><stop offset="1" stopColor="#f0a030"/></linearGradient><linearGradient id="cq" x1="1" y1="0" x2="0" y2="1"><stop offset="0" stopColor="#c66fe0"/><stop offset="1" stopColor="#f25a7a"/></linearGradient></defs><path d="M7 2h7c-3 5-3 12-1 20H7C3 22 1 18 2 14L4 6c.5-2 1.500-4 3-4Z" fill="url(#cp)"/><path d="M14 2h3c2 0 3 2 4 5l2 7c1 4-1 8-5 8h-5c3-6 3-14 1-20Z" fill="url(#cq)"/></svg></AppCell>
      <AppCell><svg width="22" height="20" viewBox="0 0 22 20"><path d="M0 2c0-1 .5-2 1.500-2H8l2 2h10c1 0 2 .5 2 2v13c0 1-1 3-2 3H2c-1 0-2-1-2-3Z" fill="#f4c542"/><path d="M0 6h22v11c0 2-1 3-2 3H2c-1 0-2-1-2-3Z" fill="#fbd96b"/><path d="M6 20v-7l5-3 5 3v7h-3v-4H9v4Z" fill="#2f8ad8"/></svg></AppCell>
      <AppCell><svg width="24" height="24" viewBox="0 0 24 24" fontFamily="Roboto"><path d="M8 2h13l2 2v15c0 2-1 3-3 3H10c-2 0-2-2-2-2Z" fill="#28a8ea"/><path d="M8 12h15v8c0 1-1 2-3 2H8Z" fill="#0f6cbd"/><rect x="1" y="6" width="13" height="13" rx="1.500" fill="#0a64ad"/><text x="7.500" y="16.500" textAnchor="middle" fontSize="11" fontWeight="700" fill="#fff">O</text></svg></AppCell>
      <AppCell><svg width="24" height="26" viewBox="0 0 24 26"><defs><linearGradient id="ff" x1="0" y1="0" x2="0" y2="1"><stop offset="0" stopColor="#ffb01f"/><stop offset=".6" stopColor="#ff5a2c"/><stop offset="1" stopColor="#e31587"/></linearGradient></defs><circle cx="12" cy="15" r="11" fill="url(#ff)"/><path d="M13 0c2 3 7 6 9 12L15 8C14 6 13 3 13 0Z" fill="#ffbd1f"/><circle cx="12" cy="15" r="5.500" fill="#5b2bb5"/><path d="M3 10c2 3 6 1 9 2 1 2-2 3-4 3 1 3 5 3 7 1-2 5-9 5-11 1-1-2-1-5-1-7Z" fill="#ff8a1f"/></svg></AppCell>
      <AppCell><svg width="24" height="24" viewBox="0 0 24 24"><path d="M17.500 1 23 3.500v17L17.500 23 7 13l-4.500 3.500L.500 15l5-4-5-4 2-1.500L7 9Z" fill="#1f8ad2"/><path d="M17.500 6.500 11 11.500l6.500 5Z" fill="#2f2a25"/></svg></AppCell>
      <AppCell><svg width="25" height="25" viewBox="0 0 25 25"><defs><linearGradient id="eg" x1="0" y1="0" x2="1" y2="1"><stop offset="0" stopColor="#3bd08a"/><stop offset="1" stopColor="#0c7ed0"/></linearGradient></defs><circle cx="12.500" cy="12.500" r="12" fill="url(#eg)"/><path d="M23 14c0-6-4-9-9-9-4 0-8 3-8 8 0 5 3 10 9 11-6 1-12-3-14-9C2 8 7 3 12 1c5 0 11 4 12 10Z" fill="#1a6fb8"/><path d="M9 13c1-3 3-4 6-4 3 0 4 2 4 4h-7c0 3 3 5 7 4-3 3-10 2-10-4Z" fill="#2f2a25"/></svg></AppCell>
      <AppCell><svg width="24" height="24" viewBox="0 0 24 24"><rect width="24" height="24" rx="4" fill="#ee1c25"/><path d="M4 7h16l-2 2.500-2.500 7.500h-2.500L12 12l-1 5H8.500L6 9.500Z" fill="#fff"/><path d="M8 9h8l-2 5-2-3-2 3Z" fill="#ee1c25"/></svg></AppCell>
      <AppCell $run>
        <svg width="26" height="26" viewBox="0 0 26 26" fontFamily="Roboto"><circle cx="11.500" cy="11.500" r="11" fill="#e33b2e"/><path d="M11.500 .5A11 11 0 0 1 22 8H11.500Z" fill="#f7c32c"/><path d="M1.500 16 6 8a6 6 0 0 0 5 9l-4 5.500a11 11 0 0 1-5.500-6.500Z" fill="#2da94f"/><circle cx="11.500" cy="11.500" r="5" fill="#4a90f0" stroke="#fff" strokeWidth="1.500"/><circle cx="18" cy="18" r="8" fill="#b8175f"/><text x="18" y="21.500" textAnchor="middle" fontSize="9.500" fill="#fff">K</text></svg>
      </AppCell>
      <AppCell $run><svg width="24" height="24" viewBox="0 0 24 24" fill="none"><path d="M12 1.500a10.500 10.500 0 0 0-9 15.800L1.500 22.500l5.400-1.400A10.500 10.500 0 1 0 12 1.500Z" stroke="#25d366" strokeWidth="2.200"/><path d="M8.500 7c-1 .8-1.200 2-.8 3.200 1 2.600 3.200 5 6 6 1.300.4 2.400 0 3-1l.3-1.500-2.300-1.200-1 1.100c-1.500-.6-2.700-1.900-3.400-3.300l1-1.100-1-2.400Z" fill="#25d366"/></svg></AppCell>
      <AppCell $run $active><svg width="20" height="24" viewBox="0 0 20 24"><rect x="12" y="0" width="8" height="24" rx="1" fill="#e8ab1a"/><rect x="6.500" y="6" width="8" height="18" rx="1" fill="#f2c811"/><rect x="0" y="11" width="8" height="13" rx="1" fill="#f8e37a"/></svg></AppCell>
      <Tray>
        <TrayCloud>
          <svg width="26" height="24" viewBox="0 0 28 24"><path d="M6 22a5.500 5.500 0 0 1-1-10.900C6 7 10 5 14 6.500c3 1 5 3.500 5 5.500a5 5 0 0 1 3 10Z" fill="#8ab8f2"/><path d="M2 18c4 2 17 2 24-1-.3 3-2 5-4 5H6c-2 0-4-2-4-4Z" fill="#5f94e0"/></svg>
          <CloudBadge>2</CloudBadge>
        </TrayCloud>
        <span>27°C</span><Forecast>Mostly cloudy</Forecast>
        <TrayChevron width="16" height="10" viewBox="0 0 16 10" fill="none" stroke="#fff" strokeWidth="1.200"><path d="m2 8 6-6 6 6"/></TrayChevron>
        <Clock>9:54 AM<br/>8/6/2025</Clock>
        <Notif>
          <NotifIcon width="17" height="16" viewBox="0 0 20 18"><path d="M1 1h18v12H8l-3 4v-4H1Z" fill="#fff"/><path d="M4 5h12M4 9h12" stroke="#333"/></NotifIcon>
          <NotifBadge>2</NotifBadge>
        </Notif>
      </Tray>
      <EdgeLine/>
    </Taskbar>
  </Page>);
}
